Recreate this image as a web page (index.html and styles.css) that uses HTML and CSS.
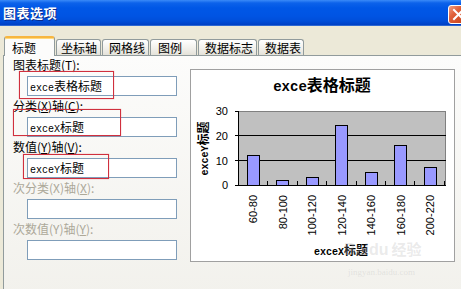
FILE: index.html
```html
<!DOCTYPE html>
<html lang="zh-CN">
<head>
<meta charset="utf-8">
<title>图表选项</title>
<link rel="stylesheet" href="styles.css">
</head>
<body>
<div class="titlebar">
  <span class="title">图表选项</span>
  <span class="close"><svg width="21" height="19" viewBox="0 0 21 19"><path d="M6 5 L15 14 M15 5 L6 14" stroke="#fff" stroke-width="2" stroke-linecap="square"/></svg></span>
</div>
<div class="tabs">
  <div class="tab active">标题</div>
  <div class="tab">坐标轴</div>
  <div class="tab">网格线</div>
  <div class="tab">图例</div>
  <div class="tab">数据标志</div>
  <div class="tab">数据表</div>
</div>
<div class="panel">
  <div class="fields">
    <div class="field">
      <div class="label">图表标题(<u>T</u>):</div>
      <div class="input"><span class="lat">exce</span>表格标题</div>
      <div class="mark mark1"></div>
    </div>
    <div class="field">
      <div class="label">分类(<u>X</u>)轴(<u>C</u>):</div>
      <div class="input"><span class="lat">exceX</span>标题</div>
      <div class="mark mark2"></div>
    </div>
    <div class="field">
      <div class="label">数值(<u>Y</u>)轴(<u>V</u>):</div>
      <div class="input"><span class="lat">exceY</span>标题</div>
      <div class="mark mark3"></div>
    </div>
    <div class="field disabled">
      <div class="label">次分类(X)轴(<u>X</u>):</div>
      <div class="input"></div>
    </div>
    <div class="field disabled">
      <div class="label">次数值(Y)轴(<u>Y</u>):</div>
      <div class="input"></div>
    </div>
  </div>
  <div class="chart">
    <svg width="263" height="191" viewBox="0 0 263 191">
      <text class="ct" x="131" y="21" text-anchor="middle"><tspan class="ct-lat">exce</tspan>表格标题</text>
      <rect x="47.5" y="41.5" width="207" height="74" fill="#C0C0C0" stroke="#808080"/>
      <g stroke="#000" stroke-width="1">
        <line x1="47" y1="65.5" x2="255" y2="65.5"/>
        <line x1="47" y1="90.5" x2="255" y2="90.5"/>
      </g>
      <g fill="#9999FF" stroke="#000" stroke-width="1">
        <rect x="56.5" y="85.5" width="12" height="30"/>
        <rect x="85.5" y="110.5" width="12" height="5"/>
        <rect x="115.5" y="107.5" width="12" height="8"/>
        <rect x="144.5" y="55.5" width="12" height="60"/>
        <rect x="174.5" y="102.5" width="12" height="13"/>
        <rect x="203.5" y="75.5" width="12" height="40"/>
        <rect x="233.5" y="97.5" width="12" height="18"/>
      </g>
      <g stroke="#000" stroke-width="1">
        <line x1="47.5" y1="41" x2="47.5" y2="116"/>
        <line x1="47" y1="115.5" x2="255" y2="115.5"/>
        <line x1="44" y1="41.5" x2="47" y2="41.5"/>
        <line x1="44" y1="65.5" x2="47" y2="65.5"/>
        <line x1="44" y1="90.5" x2="47" y2="90.5"/>
        <line x1="44" y1="115.5" x2="47" y2="115.5"/>
        <line x1="76.5" y1="111" x2="76.5" y2="115"/>
        <line x1="106.5" y1="111" x2="106.5" y2="115"/>
        <line x1="135.5" y1="111" x2="135.5" y2="115"/>
        <line x1="165.5" y1="111" x2="165.5" y2="115"/>
        <line x1="194.5" y1="111" x2="194.5" y2="115"/>
        <line x1="223.5" y1="111" x2="223.5" y2="115"/>
        <line x1="253.5" y1="111" x2="253.5" y2="115"/>
      </g>
      <g class="ax" text-anchor="end">
        <text x="37" y="45">30</text>
        <text x="37" y="69.5">20</text>
        <text x="37" y="94.5">10</text>
        <text x="37" y="119">0</text>
      </g>
      <g class="ax" text-anchor="end">
        <text transform="translate(66,125) rotate(-90)">60-80</text>
        <text transform="translate(95.5,125) rotate(-90)">80-100</text>
        <text transform="translate(125,125) rotate(-90)">100-120</text>
        <text transform="translate(154.5,125) rotate(-90)">120-140</text>
        <text transform="translate(184,125) rotate(-90)">140-160</text>
        <text transform="translate(213.5,125) rotate(-90)">160-180</text>
        <text transform="translate(243,125) rotate(-90)">200-220</text>
      </g>
      <text class="at" transform="translate(16.5,78.5) rotate(-90)" text-anchor="middle"><tspan class="at-lat">exceY</tspan>标题</text>
      <text class="at" x="150" y="184.5" text-anchor="middle"><tspan class="at-lat">exceX</tspan>标题</text>
    </svg>
    <div class="watermark">Baidu<span class="wm-cn">经验</span></div>
    <div class="watermark-url">jingyan.baidu.com</div>
  </div>
</div>
</body>
</html>
```
FILE: styles.css
```css
html, body {
  margin: 0;
  padding: 0;
}
body {
  width: 461px;
  height: 289px;
  overflow: hidden;
  background: #ECE9D8;
  font-family: "Noto Sans CJK SC", "Liberation Sans", sans-serif;
  font-size: 12px;
  color: #000;
}
.titlebar {
  height: 26px;
  display: flex;
  justify-content: space-between;
  align-items: flex-start;
  padding-left: 3px;
  background: linear-gradient(#3A8AF8 0px, #0C62EA 3px, #0057E6 8px, #0054E3 16px, #004ED9 21px, #0040C4 25px, #5A8FE0 26px);
}
.title {
  color: #fff;
  font-weight: bold;
  font-size: 13px;
  line-height: 26px;
  letter-spacing: 0.5px;
  text-shadow: 1px 1px 0 #0A2A8A;
}
.close {
  width: 21px;
  height: 19px;
  margin-top: 5px;
  margin-right: -8px;
  box-sizing: border-box;
  border: 1px solid #fff;
  border-radius: 3px;
  background: linear-gradient(135deg, #F0A085 0%, #E0603A 35%, #D14E26 70%, #C0401C 100%);
  display: flex;
}
.close svg {
  display: block;
  margin: -1px;
}
.tabs {
  display: flex;
  align-items: flex-end;
  gap: 1px;
  height: 20px;
  margin-top: 10px;
  margin-bottom: -1px;
  padding-left: 4px;
  position: relative;
  z-index: 1;
}
.tab {
  box-sizing: border-box;
  height: 16px;
  margin-bottom: 1px;
  padding-left: 6px;
  line-height: 15px;
  white-space: nowrap;
  border: 1px solid #919B9C;
  border-bottom: none;
  border-radius: 3px 3px 0 0;
  background: linear-gradient(#FFFFFF, #F0EFEA 60%, #E4E2D9);
}
.tab:nth-child(1) { width: 51px; }
.tab:nth-child(2) { width: 45px; padding-left: 4px; }
.tab:nth-child(3) { width: 47px; }
.tab:nth-child(4) { width: 47px; padding-left: 7px; }
.tab:nth-child(5) { width: 59px; }
.tab:nth-child(6) { width: 46px; }
.tab.active {
  height: 20px;
  margin-bottom: 0;
  padding-left: 7px;
  line-height: 20px;
  background: #FCFCFB;
  border-top: 2px solid #F7B640;
  box-shadow: inset 0 1px 0 #FFD97A;
}
.panel {
  margin-left: 3px;
  height: 240px;
  border-top: 1px solid #919B9C;
  border-left: 1px solid #919B9C;
  background: linear-gradient(#FCFCFB, #F2F1EC);
  display: flex;
  padding-left: 9px;
}
.fields {
  width: 177px;
  padding-top: 2px;
  flex: none;
}
.field {
  position: relative;
  margin-bottom: 3px;
}
.label {
  height: 14px;
  line-height: 14px;
  margin-bottom: 4px;
  white-space: nowrap;
}
.disabled .label {
  color: #ACA899;
}
.input {
  box-sizing: border-box;
  width: 150px;
  height: 20px;
  margin-left: 14px;
  padding-left: 2px;
  border: 1px solid #7F9DB9;
  background: #fff;
  line-height: 18px;
  white-space: nowrap;
}
.lat {
  font-family: "Liberation Mono", monospace;
  font-size: 10px;
}
.mark {
  position: absolute;
  border: 1px solid #D0303E;
  box-shadow: 0 0 1px rgba(210, 40, 50, 0.5);
}
.mark1 { left: 6px; top: 13px; width: 93px; height: 26px; }
.mark2 { left: 0; top: 10px; width: 106px; height: 25px; }
.mark3 { left: 10px; top: 14px; width: 84px; height: 23px; }
.chart {
  position: relative;
  flex: none;
  width: 265px;
  height: 193px;
  box-sizing: border-box;
  margin-top: 13px;
  border: 1px solid #A0A0A0;
  background: #fff;
}
.chart svg {
  display: block;
}
.ct {
  font-family: "Noto Sans CJK SC", sans-serif;
  font-size: 16px;
  font-weight: bold;
}
.ct-lat {
  font-family: "Liberation Mono", monospace;
  font-size: 14px;
  font-weight: bold;
}
.ax {
  font-family: "Liberation Sans", sans-serif;
  font-size: 11px;
}
.at {
  font-family: "Noto Sans CJK SC", sans-serif;
  font-size: 12px;
  font-weight: bold;
}
.at-lat {
  font-family: "Liberation Mono", monospace;
  font-size: 10px;
  font-weight: bold;
}
.watermark {
  position: absolute;
  left: 153px;
  top: 169px;
  font-family: "Liberation Sans", sans-serif;
  font-size: 16px;
  line-height: 20px;
  font-weight: bold;
  color: rgba(185, 185, 185, 0.3);
  white-space: nowrap;
}
.wm-cn {
  font-family: "Noto Sans CJK SC", sans-serif;
  font-size: 15px;
  margin-left: 3px;
}
.watermark-url {
  position: absolute;
  left: 157px;
  top: 197px;
  font-family: "Liberation Serif", serif;
  font-size: 9px;
  line-height: 10px;
  color: rgba(185, 185, 185, 0.3);
  white-space: nowrap;
}
```
